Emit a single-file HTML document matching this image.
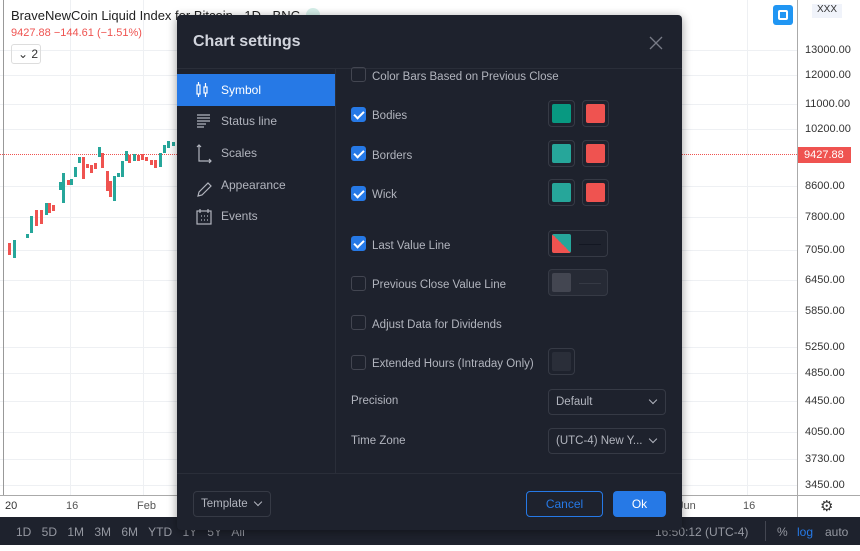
<!DOCTYPE html>
<html><head><meta charset="utf-8"><style>
*{box-sizing:border-box;margin:0;padding:0}
body{width:860px;height:551px;overflow:hidden;background:#fff;font-family:"Liberation Sans",sans-serif;position:relative}
.a{position:absolute}
.pl{position:absolute;left:805px;font-size:11px;color:#333}
.grid{position:absolute;background:#eef0f3}
.dlg{position:absolute;left:177px;top:15px;width:505px;height:515px;background:#1e222d;border-radius:4px;color:#d1d4dc;box-shadow:0 2px 10px rgba(0,0,0,.4)}
.nav{position:absolute;left:0;width:158px;height:32px;font-size:12px;color:#b2b5be;padding-left:44px;line-height:32px}
.cb{position:absolute;left:174px;width:15px;height:15px;border:1px solid #434651;border-radius:3px}
.cb.on{background:#2679e6;border-color:#2679e6}
.cb.on:after{content:"";position:absolute;left:4px;top:1px;width:4px;height:8px;border:solid #fff;border-width:0 2px 2px 0;transform:rotate(45deg)}
.lb{position:absolute;left:195px;font-size:11.5px;color:#b2b5be;line-height:15px;height:15px;margin-top:3px}
.sw{position:absolute;width:27px;height:27px;border:1px solid #363a45;border-radius:4px;padding:3px}
.sw i{display:block;width:19px;height:19px;border-radius:2px}
.sel{position:absolute;left:371px;width:118px;height:26px;border:1px solid #363a45;border-radius:4px;font-size:11.5px;color:#b2b5be;line-height:24px;padding-left:7px}
.sel:after{content:"";position:absolute;right:9px;top:7px;width:5px;height:5px;border:solid #b2b5be;border-width:0 1.5px 1.5px 0;transform:rotate(45deg)}
</style></head><body>
<div class="grid" style="left:70px;top:0;width:1px;height:495px"></div>
<div class="grid" style="left:143px;top:0;width:1px;height:495px"></div>
<div class="grid" style="left:747px;top:0;width:1px;height:495px"></div>
<div class="grid" style="left:0;top:50px;width:797px;height:1px"></div>
<div class="grid" style="left:0;top:75px;width:797px;height:1px"></div>
<div class="grid" style="left:0;top:104px;width:797px;height:1px"></div>
<div class="grid" style="left:0;top:129px;width:797px;height:1px"></div>
<div class="grid" style="left:0;top:186px;width:797px;height:1px"></div>
<div class="grid" style="left:0;top:217px;width:797px;height:1px"></div>
<div class="grid" style="left:0;top:250px;width:797px;height:1px"></div>
<div class="grid" style="left:0;top:280px;width:797px;height:1px"></div>
<div class="grid" style="left:0;top:311px;width:797px;height:1px"></div>
<div class="grid" style="left:0;top:347px;width:797px;height:1px"></div>
<div class="grid" style="left:0;top:373px;width:797px;height:1px"></div>
<div class="grid" style="left:0;top:401px;width:797px;height:1px"></div>
<div class="grid" style="left:0;top:432px;width:797px;height:1px"></div>
<div class="grid" style="left:0;top:459px;width:797px;height:1px"></div>
<div class="grid" style="left:0;top:485px;width:797px;height:1px"></div>
<div class="a" style="left:3px;top:0;width:1px;height:495px;background:#999"></div>
<div class="a" style="left:0;top:154px;width:797px;border-top:1px dotted #ef5350"></div>
<svg class="a" style="left:0;top:133px" width="180" height="140">
<g fill="#26a69a"><rect x="13" y="107" width="3" height="18"/><rect x="26" y="101" width="3" height="4"/><rect x="30" y="83" width="3" height="17"/><rect x="45" y="70" width="3" height="12"/><rect x="59" y="49" width="3" height="8"/><rect x="62" y="40" width="3" height="30"/><rect x="70" y="46" width="3" height="6"/><rect x="74" y="34" width="3" height="10"/><rect x="78" y="24" width="3" height="6"/><rect x="98" y="14" width="3" height="10"/><rect x="113" y="43" width="3" height="25"/><rect x="117" y="40" width="3" height="4"/><rect x="121" y="28" width="3" height="16"/><rect x="125" y="18" width="3" height="10"/><rect x="133" y="21" width="3" height="7"/><rect x="159" y="20" width="3" height="14"/><rect x="163" y="12" width="3" height="8"/><rect x="167" y="8" width="3" height="7"/><rect x="172" y="9" width="3" height="4"/></g>
<g fill="#ef5350"><rect x="8" y="110" width="3" height="12"/><rect x="35" y="77" width="3" height="16"/><rect x="40" y="77" width="3" height="14"/><rect x="48" y="70" width="3" height="10"/><rect x="52" y="72" width="3" height="6"/><rect x="67" y="47" width="3" height="5"/><rect x="82" y="24" width="3" height="22"/><rect x="86" y="31" width="3" height="4"/><rect x="90" y="32" width="3" height="8"/><rect x="94" y="30" width="3" height="6"/><rect x="101" y="20" width="3" height="15"/><rect x="106" y="38" width="3" height="20"/><rect x="109" y="48" width="3" height="16"/><rect x="128" y="22" width="3" height="8"/><rect x="137" y="22" width="3" height="6"/><rect x="141" y="21" width="3" height="6"/><rect x="145" y="24" width="3" height="4"/><rect x="150" y="27" width="3" height="5"/><rect x="154" y="27" width="3" height="8"/></g>
</svg>
<div class="a" style="left:11px;top:8px;font-size:13px;color:#222">BraveNewCoin Liquid Index for Bitcoin · 1D · BNC</div>
<div class="a" style="left:306px;top:8px;width:14px;height:14px;border-radius:50%;background:#d5efe9"></div>
<div class="a" style="left:11px;top:27px;font-size:11px;color:#ef5350">9427.88 −144.61 (−1.51%)</div>
<div class="a" style="left:11px;top:44px;width:30px;height:20px;border:1px solid #ddd;border-radius:3px;font-size:12px;color:#333;padding:2px 0 0 6px">⌄ 2</div>
<div class="a" style="left:797px;top:0;width:1px;height:517px;background:#aaa"></div>
<div class="a" style="left:773px;top:5px;width:20px;height:20px;border-radius:3px;background:#2196f3"><div class="a" style="left:5px;top:5px;width:10px;height:10px;border:2px solid #fff;border-radius:2px"></div></div>
<div class="a" style="left:812px;top:4px;width:30px;height:14px;background:#f0f3fa;font-size:10px;color:#333;text-align:center">XXX</div>
<div class="pl" style="top:44px">13000.00</div><div class="pl" style="top:69px">12000.00</div><div class="pl" style="top:98px">11000.00</div><div class="pl" style="top:123px">10200.00</div>
<div class="a" style="left:798px;top:147px;width:53px;height:16px;background:#ef5350;color:#fff;font-size:11px;padding:2px 0 0 6px">9427.88</div>
<div class="pl" style="top:180px">8600.00</div><div class="pl" style="top:211px">7800.00</div><div class="pl" style="top:244px">7050.00</div><div class="pl" style="top:274px">6450.00</div><div class="pl" style="top:305px">5850.00</div><div class="pl" style="top:341px">5250.00</div><div class="pl" style="top:367px">4850.00</div><div class="pl" style="top:395px">4450.00</div><div class="pl" style="top:426px">4050.00</div><div class="pl" style="top:453px">3730.00</div><div class="pl" style="top:479px">3450.00</div>
<div class="a" style="left:0;top:495px;width:860px;height:1px;background:#aaa"></div>
<div class="a" style="left:5px;top:500px;font-size:11px;color:#333">20</div>
<div class="a" style="left:66px;top:500px;font-size:11px;color:#555">16</div>
<div class="a" style="left:137px;top:500px;font-size:11px;color:#555">Feb</div>
<div class="a" style="left:678px;top:500px;font-size:11px;color:#555">Jun</div>
<div class="a" style="left:743px;top:500px;font-size:11px;color:#555">16</div>
<div class="a" style="left:820px;top:497px;font-size:15px;color:#333">⚙</div>
<div class="a" style="left:0;top:517px;width:860px;height:28px;background:#1e222d;color:#9598a1;font-size:12px">
<span class="a" style="left:16px;top:8px;word-spacing:7px">1D 5D 1M 3M 6M YTD 1Y 5Y All</span>
<span class="a" style="left:655px;top:8px">16:50:12 (UTC-4)</span>
<span class="a" style="left:765px;top:4px;width:1px;height:20px;background:#434651"></span>
<span class="a" style="left:777px;top:8px">%</span><span class="a" style="left:797px;top:8px;color:#2679e6">log</span><span class="a" style="left:825px;top:8px">auto</span></div>
<div class="a" style="left:0;top:545px;width:860px;height:6px;background:#fff"></div>
<div class="dlg">
<div class="a" style="left:16px;top:18px;font-size:16px;font-weight:bold;color:#d1d4dc">Chart settings</div>
<svg class="a" style="left:472px;top:21px" width="14" height="14" stroke="#787b86" stroke-width="1.3"><path d="M1 1l12 12M13 1L1 13"/></svg>
<div class="a" style="left:0;top:53px;width:505px;height:1px;background:#2a2e39"></div>
<div class="a" style="left:158px;top:53px;width:1px;height:405px;background:#2a2e39"></div>
<div class="nav" style="top:59px;background:#2679e6;color:#fff">Symbol</div>
<div class="nav" style="top:90px">Status line</div>
<div class="nav" style="top:122px">Scales</div>
<div class="nav" style="top:154px">Appearance</div>
<div class="nav" style="top:185px">Events</div>
<svg class="a" style="left:18px;top:64px" width="20" height="150" fill="none" stroke="#b2b5be" stroke-width="1.2">
<rect x="2" y="6" width="3" height="9" stroke="#fff"/><path d="M3.5 3v3M3.5 15v3" stroke="#fff"/><rect x="9" y="8" width="3" height="6" stroke="#fff"/><path d="M10.5 4v4M10.5 14v4" stroke="#fff"/>
<path d="M2 36h13M2 39h13M2 42h13M2 45h9M2 48h7"/>
<path d="M4 66v16h12M2 68l2-2 2 2M14 80l2 2-2 2"/>
<path d="M4 113l9-9 3 3-9 9-4 1z"/>
<rect x="2" y="132" width="14" height="13"/><path d="M5 130v4M13 130v4M6 137h1M9 137h1M12 137h1M6 141h1M9 141h1M12 141h1"/>
</svg>
<div class="cb" style="top:52px"></div><div class="lb" style="top:52px">Color Bars Based on Previous Close</div>
<div class="cb on" style="top:92px"></div><div class="lb" style="top:91px">Bodies</div>
<div class="sw" style="left:371px;top:85px"><i style="background:#089981"></i></div><div class="sw" style="left:405px;top:85px"><i style="background:#ef5350"></i></div>
<div class="cb on" style="top:131px"></div><div class="lb" style="top:131px">Borders</div>
<div class="sw" style="left:371px;top:125px"><i style="background:#26a69a"></i></div><div class="sw" style="left:405px;top:125px"><i style="background:#ef5350"></i></div>
<div class="cb on" style="top:171px"></div><div class="lb" style="top:170px">Wick</div>
<div class="sw" style="left:371px;top:164px"><i style="background:#26a69a"></i></div><div class="sw" style="left:405px;top:164px"><i style="background:#ef5350"></i></div>
<div class="cb on" style="top:221px"></div><div class="lb" style="top:221px">Last Value Line</div>
<div class="sw" style="left:371px;top:215px;width:60px"><i style="background:linear-gradient(45deg,#ef5350 50%,#26a69a 50%)"></i><span class="a" style="left:30px;top:13px;width:22px;height:1px;background:#131722"></span></div>
<div class="cb" style="top:261px"></div><div class="lb" style="top:260px">Previous Close Value Line</div>
<div class="sw" style="left:371px;top:254px;width:60px;background:#262a35"><i style="background:#434651"></i><span class="a" style="left:30px;top:13px;width:22px;height:1px;background:#363a45"></span></div>
<div class="cb" style="top:300px"></div><div class="lb" style="top:300px">Adjust Data for Dividends</div>
<div class="cb" style="top:340px"></div><div class="lb" style="top:339px">Extended Hours (Intraday Only)</div>
<div class="sw" style="left:371px;top:333px"><i style="background:#2a2e39"></i></div>
<div class="a" style="left:174px;top:380px;font-size:11.5px;color:#b2b5be">Precision</div>
<div class="sel" style="top:374px">Default</div>
<div class="a" style="left:174px;top:420px;font-size:11.5px;color:#b2b5be">Time Zone</div>
<div class="sel" style="top:413px">(UTC-4) New Y...</div>
<div class="a" style="left:0;top:458px;width:505px;height:1px;background:#2a2e39"></div>
<div class="sel" style="left:16px;top:476px;width:78px">Template</div>
<div class="a" style="left:349px;top:476px;width:77px;height:26px;border:1px solid #2679e6;border-radius:4px;color:#2679e6;font-size:12px;text-align:center;line-height:24px">Cancel</div>
<div class="a" style="left:436px;top:476px;width:53px;height:26px;background:#2679e6;border-radius:4px;color:#fff;font-size:12px;text-align:center;line-height:26px">Ok</div>
</div>
</body></html>
